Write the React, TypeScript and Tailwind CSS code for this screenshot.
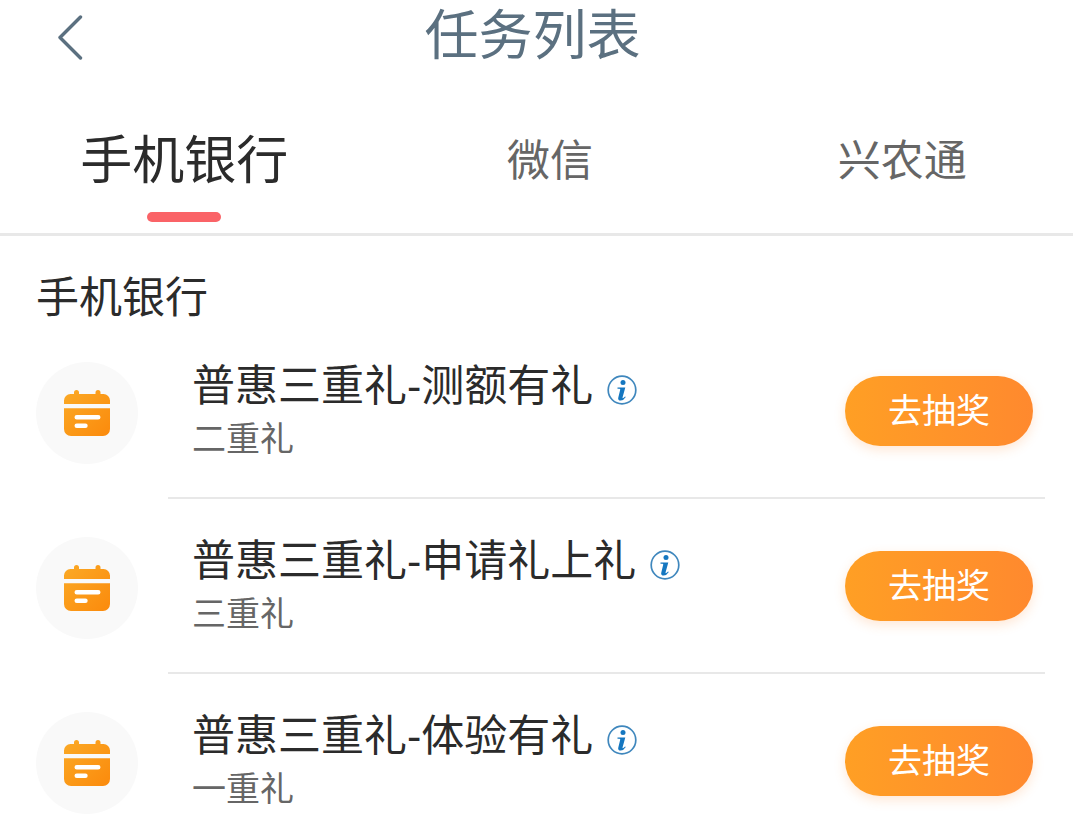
import { useState } from "react"

const tabs = ["手机银行", "微信", "兴农通"]

const tasks = [
	{ title: "普惠三重礼-测额有礼", subtitle: "二重礼" },
	{ title: "普惠三重礼-申请礼上礼", subtitle: "三重礼" },
	{ title: "普惠三重礼-体验有礼", subtitle: "一重礼" },
]

function BackIcon() {
	return (
		<svg
			viewBox="0 0 28 48"
			fill="none"
			stroke="currentColor"
			strokeWidth={3.4}
			strokeLinecap="round"
			strokeLinejoin="round"
			className="h-12 w-7"
		>
			<path d="M24.500 5L4 25.500L24.500 46" />
		</svg>
	)
}

function CalendarIcon() {
	return (
		<svg viewBox="0 0 48 48" className="size-12">
			<defs>
				<linearGradient id="calendar" x1="0" y1="0" x2="1" y2="1">
					<stop offset="0" stopColor="#fbaa26" />
					<stop offset="1" stopColor="#fb8a0c" />
				</linearGradient>
			</defs>
			<path
				fill="url(#calendar)"
				d="M1 15V11.500a6.500 6.500 0 0 1 6.500-6.500h3.500V3.500a2.500 2.500 0 0 1 5 0V5h16.500V3.500a2.500 2.500 0 0 1 5 0V5h3a6.500 6.500 0 0 1 6.500 6.500V15zM1 19.300h46V40a7 7 0 0 1-7 7H8a7 7 0 0 1-7-7z"
			/>
			<path
				d="M13.800 28.300h21.400M13.800 36.700h8.600"
				stroke="#fff"
				strokeWidth={4.6}
				strokeLinecap="round"
			/>
		</svg>
	)
}

function InfoIcon() {
	return (
		<svg viewBox="0 0 30 30" fill="none" className="size-[30px]">
			<circle cx="15" cy="15" r="13.800" stroke="#3f87bd" strokeWidth={1.7} />
			<circle cx="16" cy="7.500" r="2.500" fill="#1577c0" />
			<path
				d="M10.500 12.400h7.800L15.600 22.200q-.3 1.300.6.900q.8-.4 1.800-1.700l.8.600q-2.400 3.600-5 3.600q-3.300 0-2.500-3.100L13.200 14.700q.2-.9-.7-.9h-2z"
				fill="#1577c0"
			/>
		</svg>
	)
}

export default function App() {
	const [activeTab, setActiveTab] = useState(tabs[0])

	return (
		<main className="min-h-screen bg-white font-['Liberation_Sans','Noto_Sans_CJK_SC',sans-serif] text-[#2b2b2b]">
			<header className="grid h-[72px] grid-cols-[1fr_auto_1fr] items-center pr-16 pl-14 text-[#5b7080]">
				<button type="button" aria-label="返回" className="w-7">
					<BackIcon />
				</button>
				<h1 className="text-[54px] leading-[72px]">任务列表</h1>
			</header>

			<nav className="grid h-[164px] grid-cols-[368fr_362fr_341fr] border-b-3 border-[#e8e8e8]">
				{tabs.map((tab) => (
					<button
						key={tab}
						type="button"
						onClick={() => setActiveTab(tab)}
						className="flex flex-col items-center pt-12"
					>
						<span
							className={
								activeTab === tab
									? "text-[52px] leading-[82px]"
									: "text-[43px] leading-[82px] text-[#666]"
							}
						>
							{tab}
						</span>
						{activeTab === tab && (
							<span className="mt-2.5 h-[10px] w-[74px] rounded-full bg-[#fa6367]" />
						)}
					</button>
				))}
			</nav>

			<section>
				<h2 className="px-9 pt-9 text-[43px] leading-[52px]">
					{activeTab}
				</h2>
				<ul className="pr-7 pl-9">
					{tasks.map((task) => (
						<li key={task.title} className="group flex gap-[30px]">
							<div className="mt-[38px] flex size-[102px] shrink-0 items-center justify-center rounded-full bg-[#f9f9f9]">
								<CalendarIcon />
							</div>
							<div className="flex flex-1 items-center justify-between border-b-2 border-[#e8e8e8] pt-9 pr-3 pb-[31px] pl-6 group-last:border-0 group-last:pb-0">
								<div>
									<div className="flex items-center gap-3.5">
										<h3 className="text-[43px] leading-[53px]">
											{task.title}
										</h3>
										<button
											type="button"
											aria-label="任务说明"
											className="pt-1.5"
										>
											<InfoIcon />
										</button>
									</div>
									<p className="text-[34px] leading-[53px] text-[#666]">
										{task.subtitle}
									</p>
								</div>
								<button
									type="button"
									className="mb-1 h-[70px] w-[188px] rounded-full bg-linear-to-r from-[#ff9f24] to-[#ff892e] text-[34px] text-white shadow-[0_4px_12px_#ff892e33]"
								>
									去抽奖
								</button>
							</div>
						</li>
					))}
				</ul>
			</section>
		</main>
	)
}
